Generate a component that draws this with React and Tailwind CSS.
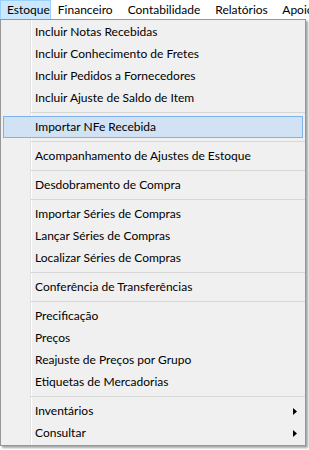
import React from "react";

const groups = [
  ["Incluir Notas Recebidas", "Incluir Conhecimento de Fretes", "Incluir Pedidos a Fornecedores", "Incluir Ajuste de Saldo de Item"],
  ["Importar NFe Recebida"],
  ["Acompanhamento de Ajustes de Estoque"],
  ["Desdobramento de Compra"],
  ["Importar Séries de Compras", "Lançar Séries de Compras", "Localizar Séries de Compras"],
  ["Conferência de Transferências"],
  ["Precificação", "Preços", "Reajuste de Preços por Grupo", "Etiquetas de Mercadorias"],
  ["Inventários", "Consultar"],
];

const sub = new Set(["Inventários", "Consultar"]);

function Item({ label }) {
  const hover = label === "Importar NFe Recebida";
  return (
    <div
      className={
        "h-[22px] flex items-center justify-between mx-[2px] pl-[31px] pr-[5px] border " +
        (hover ? "bg-[#d0e2f4] border-[#7db3ea]" : "border-transparent")
      }
    >
      <span className="leading-none">{label}</span>
      {sub.has(label) && (
        <svg width="4" height="7" viewBox="0 0 4 7" className="block">
          <path d="M0 0 L4 3.5 L0 7 Z" fill="#000" />
        </svg>
      )}
    </div>
  );
}

function Sep() {
  return (
    <div className="h-[7px] flex items-center pl-[30px]">
      <div className="h-px w-full bg-[#d7d7d7]" />
    </div>
  );
}

export default function App() {
  return (
    <div
      className="w-[309px] h-[450px] bg-white relative overflow-hidden text-[12px] text-black"
      style={{ fontFamily: 'Lato, "Noto Sans", Arial, sans-serif' }}
    >
      <div className="h-[20px] flex items-stretch whitespace-nowrap">
        <div className="w-[56px] pl-[6px] flex items-center bg-[#cce8ff] border border-[#99d1ff]">Estoque</div>
        <div className="pl-[7px] pr-[7.5px] flex items-center">Financeiro</div>
        <div className="px-[7.5px] flex items-center">Contabilidade</div>
        <div className="px-[7.5px] flex items-center">Relatórios</div>
        <div className="px-[7px] flex items-center">Apoio</div>
      </div>
      <div className="absolute left-0 top-[19px] w-[306px] border border-[#979797] bg-[#f0f0f0] py-[1px] shadow-[2px_2px_2px_rgba(0,0,0,0.35)] whitespace-nowrap">
        <div className="absolute left-[29px] top-0 bottom-0 w-px bg-[#e2e2e2]" />
        <div className="absolute left-[30px] top-0 bottom-0 w-px bg-white" />
        <div className="relative">
          {groups.map((g, i) => (
            <React.Fragment key={i}>
              {i > 0 && <Sep />}
              {g.map((l) => (
                <Item key={l} label={l} />
              ))}
            </React.Fragment>
          ))}
        </div>
      </div>
    </div>
  );
}
